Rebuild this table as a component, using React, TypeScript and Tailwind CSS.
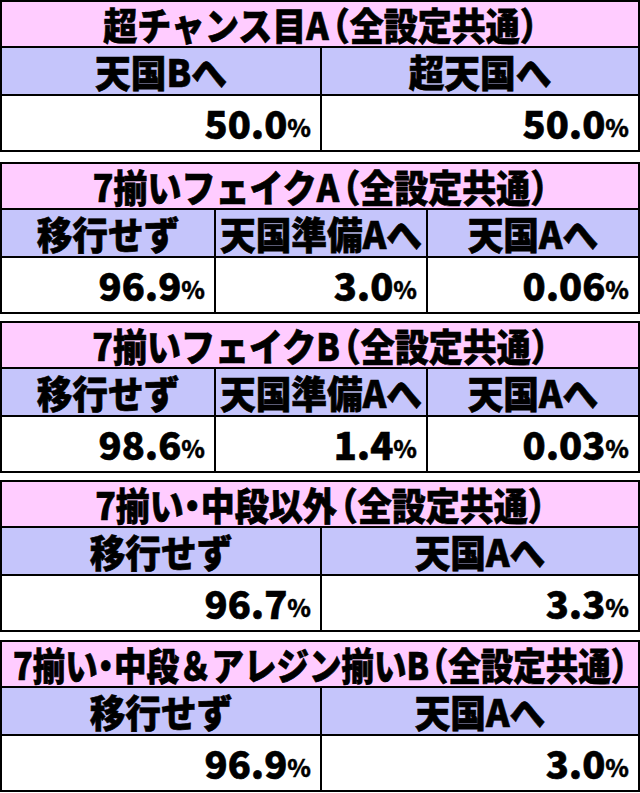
import React from "react";

type T = { title: string; headers: string[]; values: string[]; mt: string; squeeze?: boolean };

const tables: T[] = [
  { title: "超チャンス目A", headers: ["天国Bへ", "超天国へ"], values: ["50.0", "50.0"], mt: "mt-0" },
  { title: "7揃いフェイクA", headers: ["移行せず", "天国準備Aへ", "天国Aへ"], values: ["96.9", "3.0", "0.06"], mt: "mt-[10px]" },
  { title: "7揃いフェイクB", headers: ["移行せず", "天国準備Aへ", "天国Aへ"], values: ["98.6", "1.4", "0.03"], mt: "mt-[7px]" },
  { title: "7揃い・中段以外", headers: ["移行せず", "天国Aへ"], values: ["96.7", "3.3"], mt: "mt-[7px]" },
  { title: "7揃い・中段＆アレジン揃いB", headers: ["移行せず", "天国Aへ"], values: ["96.9", "3.0"], mt: "mt-[8px]", squeeze: true },
];

function Table({ t }: { t: T }) {
  const cols = t.headers.length === 3 ? "grid-cols-3" : "grid-cols-2";
  return (
    <div className={`${t.mt} border-2 border-black flex flex-col`}>
      <div className="h-[46px] bg-[#ffccff] border-b-2 border-black flex items-center justify-center">
        <span
          className={`inline-block font-black leading-none whitespace-nowrap [font-feature-settings:'halt'] [-webkit-text-stroke:0.6px_black] ${t.squeeze ? "text-[32.5px] scale-y-[1.16]" : "text-[34px] scale-y-[1.11]"}`}
        >
          {t.title}
          <span className={t.squeeze ? "ml-[3px]" : "ml-[4px]"}>（全設定共通）</span>
        </span>
      </div>
      <div className={`grid ${cols} h-[48px] bg-[#c5c5fb] border-b-2 border-black`}>
        {t.headers.map((h, i) => (
          <div
            key={i}
            className={`flex items-center justify-center ${i > 0 ? "border-l-2 border-black" : ""}`}
          >
            <span className="inline-block text-[35.7px] font-black leading-none whitespace-nowrap scale-y-[1.06] [-webkit-text-stroke:0.6px_black]">
              {h}
            </span>
          </div>
        ))}
      </div>
      <div className={`grid ${cols} h-[54px] bg-white`}>
        {t.values.map((v, i) => (
          <div
            key={i}
            className={`flex items-center justify-end pr-[9px] ${i > 0 ? "border-l-2 border-black" : ""}`}
          >
            <span className="text-[38px] font-black leading-none [-webkit-text-stroke:0.6px_black]">{v}</span>
            <span className="text-[24px] font-black leading-none mt-[8px] [-webkit-text-stroke:0.3px_black]">%</span>
          </div>
        ))}
      </div>
    </div>
  );
}

export default function App() {
  return (
    <div className="w-[640px] h-[793px] bg-white text-black font-['Noto_Sans_CJK_JP','Noto_Sans',sans-serif] overflow-hidden">
      {tables.map((t, i) => (
        <Table key={i} t={t} />
      ))}
    </div>
  );
}
